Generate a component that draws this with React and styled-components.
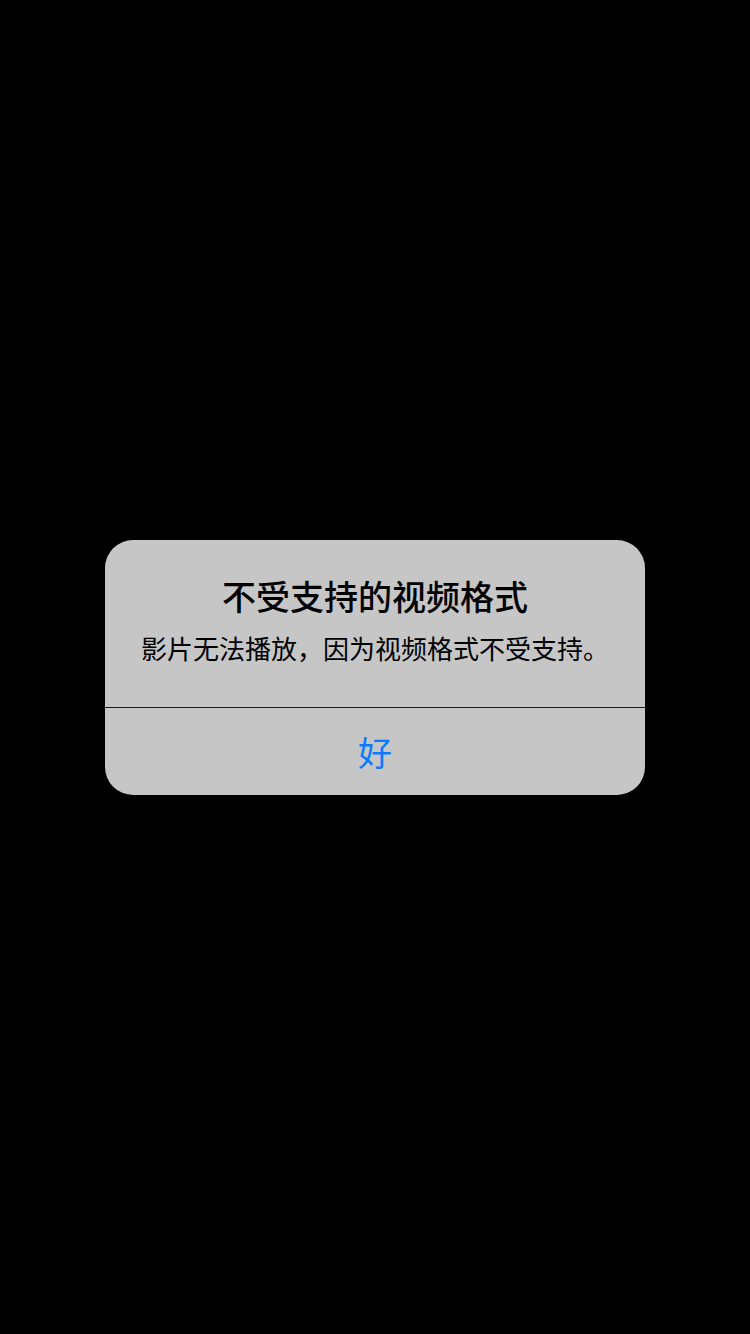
import React from "react";
import styled, { createGlobalStyle } from "styled-components";

const GlobalStyle = createGlobalStyle`
  html, body {
    margin: 0;
    padding: 0;
    background: #000;
  }
  body {
    font-family: "Noto Sans CJK SC", "Noto Sans", sans-serif;
  }
`;

const Screen = styled.div`
  width: 750px;
  height: 1334px;
  background: #000;
  display: flex;
  align-items: center;
  justify-content: center;
`;

const Alert = styled.div`
  width: 540px;
  background: #c6c6c6;
  border-radius: 28px;
  overflow: hidden;
  display: flex;
  flex-direction: column;
`;

const Content = styled.div`
  height: 168px;
  box-sizing: border-box;
  padding-top: 36px;
  display: flex;
  flex-direction: column;
  align-items: center;
  gap: 14px;
  border-bottom: 1px solid #1a1a1a;
`;

const Title = styled.h2`
  margin: 0;
  font-size: 34px;
  line-height: 40px;
  font-weight: 500;
  color: #000;
`;

const Message = styled.p`
  margin: 0;
  font-size: 26px;
  line-height: 36px;
  font-weight: 400;
  color: #000;
`;

const Button = styled.button`
  height: 87px;
  border: none;
  background: transparent;
  font-family: inherit;
  font-size: 34px;
  line-height: 85px;
  color: #0a7aff;
  padding: 0;
  cursor: pointer;
`;

export default function App() {
  return (
    <>
      <GlobalStyle />
      <Screen>
        <Alert>
          <Content>
            <Title>不受支持的视频格式</Title>
            <Message>影片无法播放，因为视频格式不受支持。</Message>
          </Content>
          <Button>好</Button>
        </Alert>
      </Screen>
    </>
  );
}
